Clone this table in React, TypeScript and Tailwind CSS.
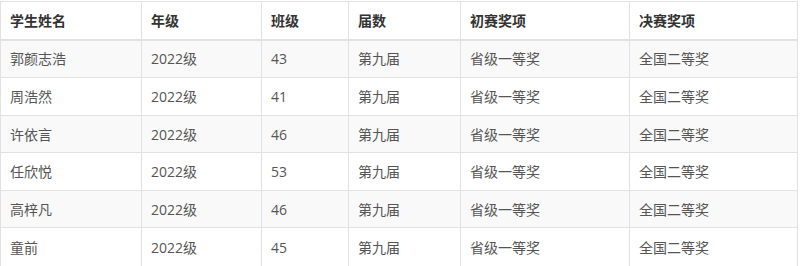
const headers = ['学生姓名', '年级', '班级', '届数', '初赛奖项', '决赛奖项'];

const students = [
  { name: '郭颜志浩', grade: '2022级', cls: '43', session: '第九届', prelim: '省级一等奖', final: '全国二等奖' },
  { name: '周浩然', grade: '2022级', cls: '41', session: '第九届', prelim: '省级一等奖', final: '全国二等奖' },
  { name: '许依言', grade: '2022级', cls: '46', session: '第九届', prelim: '省级一等奖', final: '全国二等奖' },
  { name: '任欣悦', grade: '2022级', cls: '53', session: '第九届', prelim: '省级一等奖', final: '全国二等奖' },
  { name: '高梓凡', grade: '2022级', cls: '46', session: '第九届', prelim: '省级一等奖', final: '全国二等奖' },
  { name: '童前', grade: '2022级', cls: '45', session: '第九届', prelim: '省级一等奖', final: '全国二等奖' },
];

const widths = ['w-[141px]', 'w-[120px]', 'w-[87px]', 'w-[112px]', 'w-[169px]', 'w-[168px]'];
// rows in the screenshot alternate between 37 and 38px
const rowHeights = ['h-[38px]', 'h-[38px]', 'h-[37px]', 'h-[38px]', 'h-[37px]', 'h-[40px]'];

export default function App() {
  return (
    <div className="bg-white pt-px font-['Open_Sans','Noto_Sans_CJK_SC',sans-serif] text-[14px]">
      <table className="w-[797px] table-fixed border-collapse border border-[#e2e2e2]">
        <colgroup>
          {widths.map((w, i) => (
            <col key={i} className={w} />
          ))}
        </colgroup>
        <thead>
          <tr className="h-[38px]">
            {headers.map((h) => (
              <th
                key={h}
                className="border border-b-2 border-[#e2e2e2] px-[9px] text-left align-middle font-bold text-[#333]"
              >
                {h}
              </th>
            ))}
          </tr>
        </thead>
        <tbody>
          {students.map((s, i) => (
            <tr key={s.name} className={`${rowHeights[i]} ${i % 2 === 0 ? 'bg-[#f9f9f9]' : 'bg-white'}`}>
              {[s.name, s.grade, s.cls, s.session, s.prelim, s.final].map((v, j) => (
                <td key={j} className="border border-[#e2e2e2] px-[9px] align-middle text-[#555]">
                  {v}
                </td>
              ))}
            </tr>
          ))}
        </tbody>
      </table>
    </div>
  );
}
